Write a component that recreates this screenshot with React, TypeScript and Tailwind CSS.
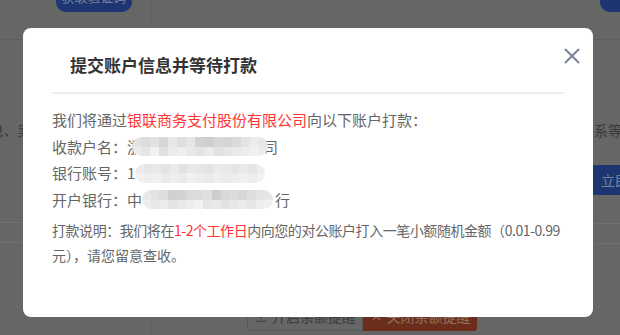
import { X } from 'lucide-react'

// pixel-mosaic blur used to hide account details
const mosaicA = [
  ['bg-[#e4e4e4]', 'bg-[#dcdcdc]', 'bg-[#e2e2e2]', 'bg-[#d6d6d6]', 'bg-[#e8e8e8]', 'bg-[#dedede]', 'bg-[#e6e6e6]', 'bg-[#d2d2d2]', 'bg-[#cfcfcf]', 'bg-[#d8d8d8]', 'bg-[#d4d4d4]', 'bg-[#dadada]', 'bg-[#e4e4e4]', 'bg-[#ececec]', 'bg-[#e6e6e6]'],
  ['bg-[#ececec]', 'bg-[#e6e6e6]', 'bg-[#f2f2f2]', 'bg-[#e0e0e0]', 'bg-[#ececec]', 'bg-[#efefef]', 'bg-[#e8e8e8]', 'bg-[#e4e4e4]', 'bg-[#ebebeb]', 'bg-[#e2e2e2]', 'bg-[#e6e6e6]', 'bg-[#eaeaea]', 'bg-[#ededed]', 'bg-[#f0f0f0]', 'bg-[#ebebeb]'],
]
const mosaicB = [
  ['bg-[#ececec]', 'bg-[#e6e6e6]', 'bg-[#e9e9e9]', 'bg-[#e4e4e4]', 'bg-[#ebebeb]', 'bg-[#e2e2e2]', 'bg-[#e8e8e8]', 'bg-[#e6e6e6]', 'bg-[#e3e3e3]', 'bg-[#eaeaea]', 'bg-[#e8e8e8]', 'bg-[#e5e5e5]', 'bg-[#eaeaea]', 'bg-[#e6e6e6]', 'bg-[#eeeeee]'],
  ['bg-[#f2f2f2]', 'bg-[#eeeeee]', 'bg-[#f0f0f0]', 'bg-[#eaeaea]', 'bg-[#efefef]', 'bg-[#ebebeb]', 'bg-[#f1f1f1]', 'bg-[#ececec]', 'bg-[#eaeaea]', 'bg-[#efefef]', 'bg-[#ececec]', 'bg-[#eeeeee]', 'bg-[#f1f1f1]', 'bg-[#ededed]', 'bg-[#f2f2f2]'],
]
const mosaicC = [
  ['bg-[#e8e8e8]', 'bg-[#e2e2e2]', 'bg-[#dedede]', 'bg-[#cfcfcf]', 'bg-[#d2d2d2]', 'bg-[#dadada]', 'bg-[#dcdcdc]', 'bg-[#e0e0e0]', 'bg-[#cdcdcd]', 'bg-[#d8d8d8]', 'bg-[#dcdcdc]', 'bg-[#d6d6d6]', 'bg-[#dedede]', 'bg-[#e4e4e4]', 'bg-[#e6e6e6]'],
  ['bg-[#eeeeee]', 'bg-[#e8e8e8]', 'bg-[#ebebeb]', 'bg-[#e4e4e4]', 'bg-[#e9e9e9]', 'bg-[#ececec]', 'bg-[#f2f2f2]', 'bg-[#e6e6e6]', 'bg-[#e9e9e9]', 'bg-[#e2e2e2]', 'bg-[#e8e8e8]', 'bg-[#ebebeb]', 'bg-[#e6e6e6]', 'bg-[#eeeeee]', 'bg-[#f0f0f0]'],
]

function Mosaic({ rows, className }: { rows: string[][]; className: string }) {
  return (
    <span className={`relative z-10 inline-flex h-[19px] shrink-0 flex-col overflow-hidden rounded-full align-middle blur-[0.6px] ${className}`}>
      {rows.map((row, r) => (
        <span key={r} className="flex flex-1">
          {row.map((c, i) => (
            <span key={i} className={`flex-1 ${c}`} />
          ))}
        </span>
      ))}
    </span>
  )
}

export default function App() {
  return (
    <div className="relative h-[335px] w-[620px] overflow-hidden bg-[#666666] font-['Noto_Sans_CJK_SC',sans-serif]">
      {/* page behind the mask */}
      <div className="flex h-full">
        <div className="flex w-[152px] shrink-0 flex-col border-r border-[#626262]">
          <div className="h-[40px] border-b border-[#5f5f5f]">
            <div className="ml-[56px] flex h-[12px] w-[76px] justify-center overflow-hidden rounded-b-[10px] bg-[#1d3570]">
              <span className="-mt-[12px] text-[13px] leading-[18px] text-[#75809a]">获取验证码</span>
            </div>
          </div>
          <div className="-ml-[10px] mt-[80px] whitespace-nowrap text-[14px] leading-[20px] text-[#3a3a3a]">息、案例</div>
          <div className="mt-[82px] h-[21px] border-y border-[#707070]" />
        </div>
        <div className="w-[18px] shrink-0 border-r border-[#626262]" />
        <div className="flex min-w-0 flex-1 flex-col">
          <div className="flex h-[40px] border-b border-[#5f5f5f] pl-[430px]">
            <div className="h-[12px] w-[80px] shrink-0 rounded-b-[10px] bg-[#1d3570]" />
          </div>
          <div className="mt-[80px] whitespace-nowrap pl-[424px] text-[14px] leading-[20px] text-[#3a3a3a]">系等待</div>
          <div className="mt-[25px] flex pl-[423px]">
            <div className="flex h-[30px] w-[90px] shrink-0 items-center whitespace-nowrap bg-[#1d3570] pl-[8px] text-[14px] text-[#7683a0]">立即认证</div>
          </div>
          <div className="mt-[28px] h-[21px] border-y border-[#707070]" />
          <div className="mt-[57px] flex pl-[77px]">
            <div className="flex h-[30px] w-[116px] shrink-0 items-center justify-center gap-[4px] whitespace-nowrap rounded-l-[3px] border border-[#5a5a5a] text-[14px] text-[#3c3c3c]">
              <svg viewBox="0 0 16 16" className="h-[14px] w-[14px]" fill="none" stroke="#3c3c3c" strokeWidth="1.4">
                <path d="M8 2v8M4.5 6.5 8 10l3.5-3.5M2 14h12" />
              </svg>
              开启余额提醒
            </div>
            <div className="flex h-[30px] w-[114px] shrink-0 items-center justify-center gap-[4px] whitespace-nowrap rounded-r-[3px] bg-[#6b2e1c] text-[14px] text-[#95705f]">
              <X size={13} strokeWidth={2} />
              关闭余额提醒
            </div>
          </div>
        </div>
      </div>

      {/* dialog */}
      <div className="absolute left-[23px] top-[28px] h-[289px] w-[570px] rounded-[8px] bg-white px-[29px]">
        <button className="absolute right-[8px] top-[15px] text-[#7b8496]">
          <X size={26} strokeWidth={1.8} />
        </button>
        <div className="border-b-2 border-[#eeeeee] pb-[15px] pl-[18px] pt-[25px] text-[17px] font-bold leading-[24px] text-[#333333]">
          提交账户信息并等待打款
        </div>
        <div className="mt-[13px] text-[15px] leading-[26.5px] text-[#666666]">
          <div>
            我们将通过<span className="text-[#ff3333]">银联商务支付股份有限公司</span>向以下账户打款：
          </div>
          <div className="flex items-center">
            收款户名：浙
            <Mosaic rows={mosaicA} className="-ml-[10px] w-[136px]" />
            <span className="-ml-[5px]">司</span>
          </div>
          <div className="flex items-center">
            银行账号：1
            <Mosaic rows={mosaicB} className="w-[130px]" />
          </div>
          <div className="flex items-center">
            开户银行：中
            <Mosaic rows={mosaicC} className="w-[131px]" />
            <span className="ml-[2px]">行</span>
          </div>
        </div>
        <div className="mt-[5px] text-[14px] leading-[25px] text-[#666666]">
          <div className="whitespace-nowrap tracking-[-0.45px]">
            打款说明：我们将在<span className="text-[#ff3333]">1-2个工作日</span>内向您的对公账户打入一笔小额随机金额（0.01-0.99
          </div>
          <div>元），请您留意查收。</div>
        </div>
      </div>
    </div>
  )
}
